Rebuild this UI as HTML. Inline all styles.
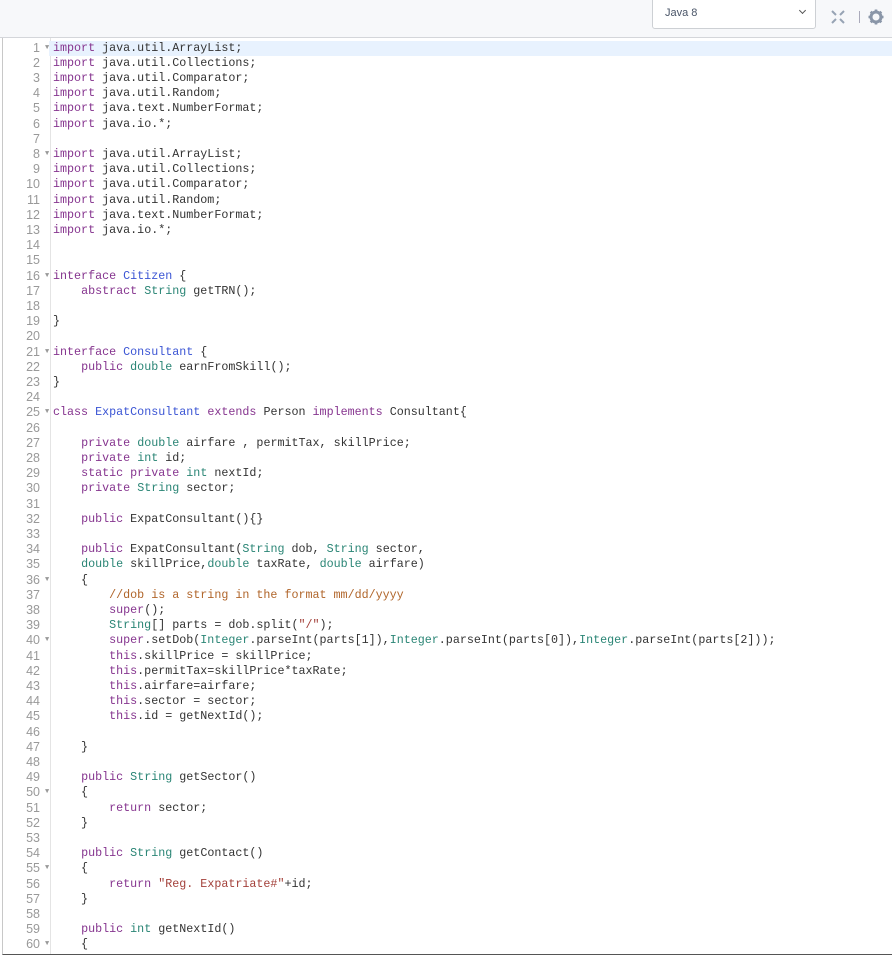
<!DOCTYPE html>
<html><head><meta charset="utf-8"><style>
body{margin:0;width:892px;height:956px;overflow:hidden;background:#fff;font-family:"Liberation Sans",sans-serif;}
.top{position:absolute;left:0;top:0;width:892px;height:37px;background:#f7f8fa;border-bottom:1px solid #d4d6da;}
.sel{position:absolute;left:652px;top:-1px;width:162px;height:28px;background:#fff;border:1px solid #cdd0d4;border-radius:0 0 3px 3px;}
.sel span{position:absolute;left:12px;top:7px;font-size:11px;color:#4a5568;}
.sel i{position:absolute;right:10px;top:8px;width:4px;height:4px;border-right:1.3px solid #555;border-bottom:1.3px solid #555;transform:rotate(45deg);}
.ed{position:absolute;left:2px;top:38px;width:890px;height:916px;border-left:1px solid #c8c8c8;border-bottom:1px solid #555;}
.gut{position:absolute;left:0;top:0;width:47px;height:916px;border-right:1px solid #e4e4e4;background:#fff;}
.code{position:absolute;left:0;top:2.5px;width:890px;font-family:"Liberation Mono",monospace;font-size:11.7px;color:#333;}
.l{height:15.21px;line-height:15.21px;white-space:pre;position:relative;}
.n{position:absolute;left:0;width:37px;text-align:right;color:#999;font-family:"Liberation Sans",sans-serif;font-size:12.5px;}
.f{position:absolute;left:42px;color:#999;font-size:7px;}
.t{position:absolute;left:50px;}
.hl{background:#e8f2fe;margin-left:46px;}
.hl .n{left:-46px}.hl .f{left:-4px}.hl .t{left:4px}
.k{color:#86358f}.y{color:#2a8575}.d{color:#3b55d4}.s{color:#a3403a}.c{color:#b0652a}
</style></head><body>
<div class="top">
<div class="sel"><span>Java 8</span><i></i></div>
<svg style="position:absolute;left:830px;top:9px" width="16" height="16" viewBox="0 0 16 16" fill="none" stroke="#97a3b4" stroke-width="2"><path d="M2 2l4 4M14 2l-4 4M2 14l4-4M14 14l-4-4"/></svg>
<div style="position:absolute;left:859px;top:11px;width:1px;height:12px;background:#aab"></div>
<svg style="position:absolute;left:868px;top:9px" width="16" height="16" viewBox="0 0 16 16"><circle cx="8" cy="8" r="5" fill="none" stroke="#8a96a8" stroke-width="3"/><g stroke="#8a96a8" stroke-width="2.6"><path d="M8 0.5v3M8 12.5v3M0.5 8h3M12.5 8h3M2.7 2.7l2.1 2.1M11.2 11.2l2.1 2.1M2.7 13.3l2.1-2.1M11.2 4.8l2.1-2.1"/></g></svg>
</div>
<div class="ed"><div class="gut"></div><div class="code">
<div class="l hl"><span class="n">1</span><span class="f">▼</span><span class="t"><span class="k">import</span> java.util.ArrayList;</span></div>
<div class="l"><span class="n">2</span><span class="t"><span class="k">import</span> java.util.Collections;</span></div>
<div class="l"><span class="n">3</span><span class="t"><span class="k">import</span> java.util.Comparator;</span></div>
<div class="l"><span class="n">4</span><span class="t"><span class="k">import</span> java.util.Random;</span></div>
<div class="l"><span class="n">5</span><span class="t"><span class="k">import</span> java.text.NumberFormat;</span></div>
<div class="l"><span class="n">6</span><span class="t"><span class="k">import</span> java.io.*;</span></div>
<div class="l"><span class="n">7</span></div>
<div class="l"><span class="n">8</span><span class="f">▼</span><span class="t"><span class="k">import</span> java.util.ArrayList;</span></div>
<div class="l"><span class="n">9</span><span class="t"><span class="k">import</span> java.util.Collections;</span></div>
<div class="l"><span class="n">10</span><span class="t"><span class="k">import</span> java.util.Comparator;</span></div>
<div class="l"><span class="n">11</span><span class="t"><span class="k">import</span> java.util.Random;</span></div>
<div class="l"><span class="n">12</span><span class="t"><span class="k">import</span> java.text.NumberFormat;</span></div>
<div class="l"><span class="n">13</span><span class="t"><span class="k">import</span> java.io.*;</span></div>
<div class="l"><span class="n">14</span></div>
<div class="l"><span class="n">15</span></div>
<div class="l"><span class="n">16</span><span class="f">▼</span><span class="t"><span class="k">interface</span> <span class="d">Citizen</span> {</span></div>
<div class="l"><span class="n">17</span><span class="t">    <span class="k">abstract</span> <span class="y">String</span> getTRN();</span></div>
<div class="l"><span class="n">18</span></div>
<div class="l"><span class="n">19</span><span class="t">}</span></div>
<div class="l"><span class="n">20</span></div>
<div class="l"><span class="n">21</span><span class="f">▼</span><span class="t"><span class="k">interface</span> <span class="d">Consultant</span> {</span></div>
<div class="l"><span class="n">22</span><span class="t">    <span class="k">public</span> <span class="y">double</span> earnFromSkill();</span></div>
<div class="l"><span class="n">23</span><span class="t">}</span></div>
<div class="l"><span class="n">24</span></div>
<div class="l"><span class="n">25</span><span class="f">▼</span><span class="t"><span class="k">class</span> <span class="d">ExpatConsultant</span> <span class="k">extends</span> Person <span class="k">implements</span> Consultant{</span></div>
<div class="l"><span class="n">26</span></div>
<div class="l"><span class="n">27</span><span class="t">    <span class="k">private</span> <span class="y">double</span> airfare , permitTax, skillPrice;</span></div>
<div class="l"><span class="n">28</span><span class="t">    <span class="k">private</span> <span class="y">int</span> id;</span></div>
<div class="l"><span class="n">29</span><span class="t">    <span class="k">static</span> <span class="k">private</span> <span class="y">int</span> nextId;</span></div>
<div class="l"><span class="n">30</span><span class="t">    <span class="k">private</span> <span class="y">String</span> sector;</span></div>
<div class="l"><span class="n">31</span></div>
<div class="l"><span class="n">32</span><span class="t">    <span class="k">public</span> ExpatConsultant(){}</span></div>
<div class="l"><span class="n">33</span></div>
<div class="l"><span class="n">34</span><span class="t">    <span class="k">public</span> ExpatConsultant(<span class="y">String</span> dob, <span class="y">String</span> sector,</span></div>
<div class="l"><span class="n">35</span><span class="t">    <span class="y">double</span> skillPrice,<span class="y">double</span> taxRate, <span class="y">double</span> airfare)</span></div>
<div class="l"><span class="n">36</span><span class="f">▼</span><span class="t">    {</span></div>
<div class="l"><span class="n">37</span><span class="t">        <span class="c">//dob is a string in the format mm/dd/yyyy</span></span></div>
<div class="l"><span class="n">38</span><span class="t">        <span class="k">super</span>();</span></div>
<div class="l"><span class="n">39</span><span class="t">        <span class="y">String</span>[] parts = dob.split(<span class="s">"/"</span>);</span></div>
<div class="l"><span class="n">40</span><span class="f">▼</span><span class="t">        <span class="k">super</span>.setDob(<span class="y">Integer</span>.parseInt(parts[1]),<span class="y">Integer</span>.parseInt(parts[0]),<span class="y">Integer</span>.parseInt(parts[2]));</span></div>
<div class="l"><span class="n">41</span><span class="t">        <span class="k">this</span>.skillPrice = skillPrice;</span></div>
<div class="l"><span class="n">42</span><span class="t">        <span class="k">this</span>.permitTax=skillPrice*taxRate;</span></div>
<div class="l"><span class="n">43</span><span class="t">        <span class="k">this</span>.airfare=airfare;</span></div>
<div class="l"><span class="n">44</span><span class="t">        <span class="k">this</span>.sector = sector;</span></div>
<div class="l"><span class="n">45</span><span class="t">        <span class="k">this</span>.id = getNextId();</span></div>
<div class="l"><span class="n">46</span></div>
<div class="l"><span class="n">47</span><span class="t">    }</span></div>
<div class="l"><span class="n">48</span></div>
<div class="l"><span class="n">49</span><span class="t">    <span class="k">public</span> <span class="y">String</span> getSector()</span></div>
<div class="l"><span class="n">50</span><span class="f">▼</span><span class="t">    {</span></div>
<div class="l"><span class="n">51</span><span class="t">        <span class="k">return</span> sector;</span></div>
<div class="l"><span class="n">52</span><span class="t">    }</span></div>
<div class="l"><span class="n">53</span></div>
<div class="l"><span class="n">54</span><span class="t">    <span class="k">public</span> <span class="y">String</span> getContact()</span></div>
<div class="l"><span class="n">55</span><span class="f">▼</span><span class="t">    {</span></div>
<div class="l"><span class="n">56</span><span class="t">        <span class="k">return</span> <span class="s">"Reg. Expatriate#"</span>+id;</span></div>
<div class="l"><span class="n">57</span><span class="t">    }</span></div>
<div class="l"><span class="n">58</span></div>
<div class="l"><span class="n">59</span><span class="t">    <span class="k">public</span> <span class="y">int</span> getNextId()</span></div>
<div class="l"><span class="n">60</span><span class="f">▼</span><span class="t">    {</span></div>
</div></div>
</body></html>
